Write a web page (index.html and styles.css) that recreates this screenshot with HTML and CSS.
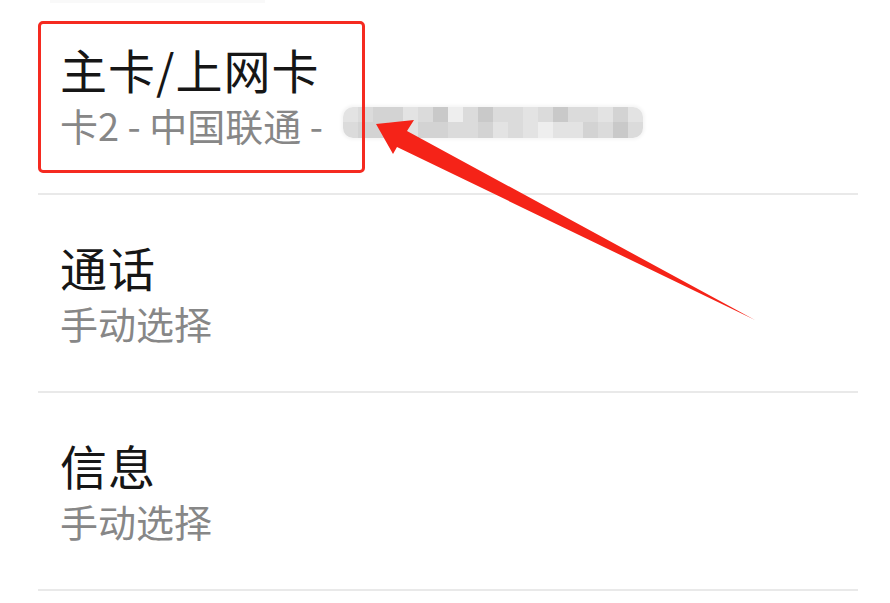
FILE: index.html
```html
<!DOCTYPE html>
<html lang="zh-CN">
<head>
<meta charset="utf-8">
<title>SIM 卡设置</title>
<link rel="stylesheet" href="styles.css">
</head>
<body>
<div class="screen">
  <div class="top-fade"></div>
  <ul class="list">
    <li class="row">
      <div class="title">主卡/上网卡</div>
      <div class="sub">
        <span>卡2 - 中国联通 -</span>
        <span class="mosaic">
          <i class="g2"></i><i class="g3"></i><i class="g4"></i><i class="g4"></i><i class="g2"></i><i class="g3"></i><i class="g5"></i><i class="g1"></i><i class="g3"></i><i class="g5"></i><i class="g3"></i><i class="g3"></i><i class="g2"></i><i class="g3"></i><i class="g5"></i><i class="g3"></i><i class="g3"></i><i class="g2"></i><i class="g4"></i><i class="g2"></i>
          <i class="g3"></i><i class="g4"></i><i class="g4"></i><i class="g3"></i><i class="g2"></i><i class="g4"></i><i class="g4"></i><i class="g3"></i><i class="g3"></i><i class="g4"></i><i class="g2"></i><i class="g3"></i><i class="g2"></i><i class="g1"></i><i class="g2"></i><i class="g2"></i><i class="g4"></i><i class="g3"></i><i class="g5"></i><i class="g3"></i>
        </span>
      </div>
    </li>
    <li class="row">
      <div class="title">通话</div>
      <div class="sub"><span>手动选择</span></div>
    </li>
    <li class="row">
      <div class="title">信息</div>
      <div class="sub"><span>手动选择</span></div>
    </li>
  </ul>

  <div class="highlight"></div>
  <svg class="arrow" width="890" height="603" viewBox="0 0 890 603" aria-hidden="true">
    <polygon points="376,124 414,120 407,131 755,320 397,147 393,154" fill="#f52318"/>
  </svg>
</div>
</body>
</html>
```

FILE: styles.css
```css
* { box-sizing: border-box; }

html, body {
  margin: 0;
  padding: 0;
  background: #ffffff;
}

body {
  font-family: "Noto Sans CJK SC", "Noto Sans", sans-serif;
  width: 890px;
  height: 603px;
  overflow: hidden;
}

.screen {
  position: relative;
  width: 890px;
  height: 603px;
  overflow: hidden;
}

.top-fade {
  margin-left: 50px;
  width: 215px;
  height: 3px;
  background: #f9f9f9;
  margin-bottom: -3px;
}

.list {
  list-style: none;
  margin: -6px 0 0 38px;
  padding: 0;
  width: 820px;
}

.row {
  height: 198px;
  padding: 44px 0 0 22px;
  border-bottom: 2px solid #e9e9e9;
}

.title {
  font-size: 47px;
  line-height: 56px;
  color: #161616;
  letter-spacing: 1px;
}

.sub {
  display: flex;
  align-items: center;
  margin-top: 3px;
  font-size: 38px;
  line-height: 50px;
  color: #878787;
}

.mosaic {
  display: grid;
  grid-template-columns: repeat(20, 1fr);
  grid-template-rows: 1fr 1fr;
  width: 300px;
  height: 31px;
  margin-left: 20px;
  margin-bottom: 6px;
  border-radius: 10px;
  overflow: hidden;
  box-shadow: 0 0 3px 2px #f6f6f6;
}

.mosaic i { display: block; }
.g1 { background: #eeeeee; }
.g2 { background: #e3e3e3; }
.g3 { background: #dbdbdb; }
.g4 { background: #d3d3d3; }
.g5 { background: #c9c9c9; }

.highlight {
  position: absolute;
  left: 38px;
  top: 21px;
  width: 327px;
  height: 152px;
  border: 3px solid #f52a20;
  border-radius: 5px;
}

.arrow {
  position: absolute;
  left: 0;
  top: 0;
}
```
